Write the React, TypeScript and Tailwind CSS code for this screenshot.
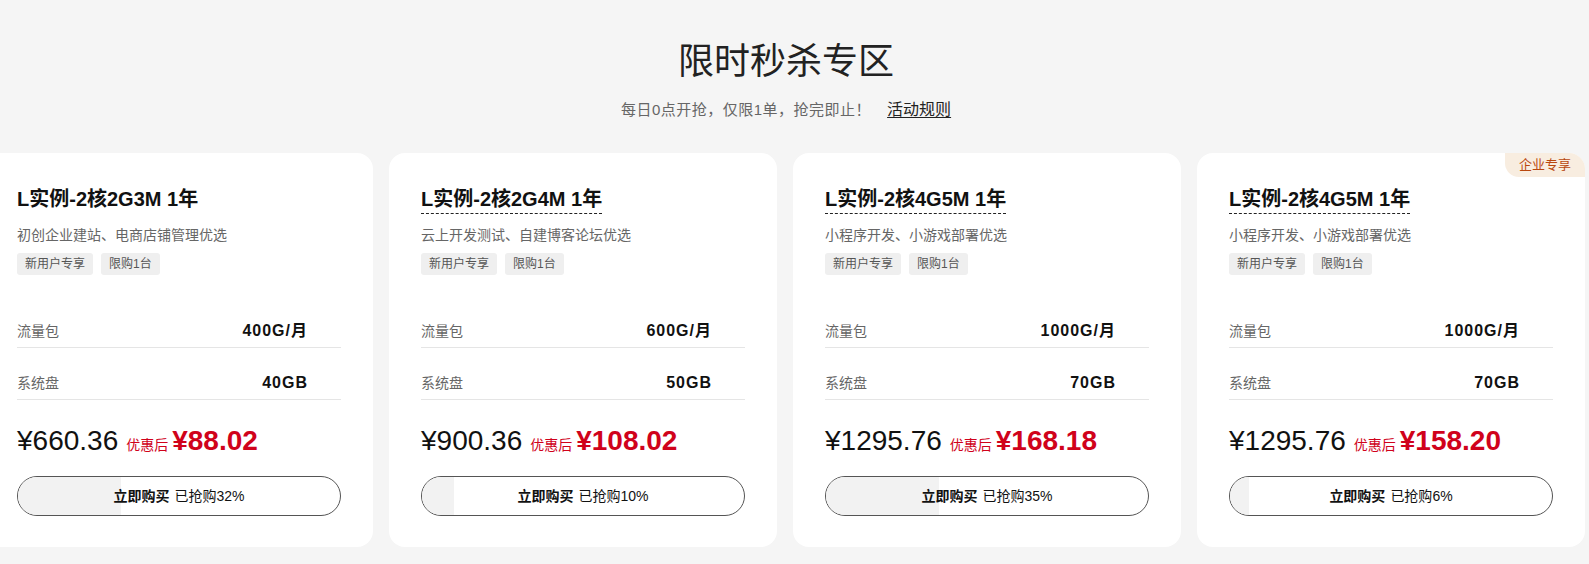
import React from "react";

type Card = {
  title: string;
  desc: string;
  dashed: boolean;
  traffic: string;
  disk: string;
  orig: string;
  price: string;
  pct: number;
  badge?: string;
};

const cards: Card[] = [
  { title: "L实例-2核2G3M 1年", desc: "初创企业建站、电商店铺管理优选", dashed: false, traffic: "400G/月", disk: "40GB", orig: "¥660.36", price: "¥88.02", pct: 32 },
  { title: "L实例-2核2G4M 1年", desc: "云上开发测试、自建博客论坛优选", dashed: true, traffic: "600G/月", disk: "50GB", orig: "¥900.36", price: "¥108.02", pct: 10 },
  { title: "L实例-2核4G5M 1年", desc: "小程序开发、小游戏部署优选", dashed: true, traffic: "1000G/月", disk: "70GB", orig: "¥1295.76", price: "¥168.18", pct: 35 },
  { title: "L实例-2核4G5M 1年", desc: "小程序开发、小游戏部署优选", dashed: true, traffic: "1000G/月", disk: "70GB", orig: "¥1295.76", price: "¥158.20", pct: 6, badge: "企业专享" },
];

function ProductCard({ c }: { c: Card }) {
  return (
    <div className="relative w-[388px] shrink-0 rounded-[16px] bg-white px-8 pt-8 pb-[31px]">
      {c.badge && (
        <div className="absolute right-0 top-0 flex h-[24px] w-[80px] items-center justify-center rounded-tr-[16px] rounded-bl-[14px] bg-[#f8ede0] text-[13px] leading-[24px] text-[#b9470e]">
          {c.badge}
        </div>
      )}
      <div>
        <span
          className={
            "inline-block border-b border-dashed text-[20px] font-bold leading-[28px] text-[#111] " +
            (c.dashed ? "border-[#222]" : "border-transparent")
          }
        >
          {c.title}
        </span>
      </div>
      <div className="mt-[10px] text-[14px] leading-[22px] text-[#666]">{c.desc}</div>
      <div className="mt-[7px] flex gap-2">
        <span className="h-[22px] rounded-[3px] bg-[#efefef] px-2 text-[12px] leading-[22px] text-[#555]">新用户专享</span>
        <span className="h-[22px] rounded-[3px] bg-[#efefef] px-2 text-[12px] leading-[22px] text-[#555]">限购1台</span>
      </div>
      <div className="mt-[21px]">
        <div className="flex justify-between border-b border-[#e5e5e5] pt-6 pb-[5px] leading-[22px]">
          <span className="text-[14px] text-[#666]">流量包</span>
          <span className="pr-[33px] text-[16px] font-bold tracking-[1px] text-[#111]">{c.traffic}</span>
        </div>
        <div className="flex justify-between border-b border-[#e5e5e5] pt-6 pb-[5px] leading-[22px]">
          <span className="text-[14px] text-[#666]">系统盘</span>
          <span className="pr-[33px] text-[16px] font-bold tracking-[1px] text-[#111]">{c.disk}</span>
        </div>
      </div>
      <div className="mt-[21px] flex items-baseline whitespace-nowrap leading-[40px]">
        <span className="text-[28px] text-[#111]">{c.orig}</span>
        <span className="ml-2 text-[14px] text-[#d0021b]">优惠后</span>
        <span className="ml-[4px] text-[28px] font-bold text-[#d0021b]">{c.price}</span>
      </div>
      <div className="relative mt-[11px] h-[40px] overflow-hidden rounded-full border border-[#555]">
        <div className="absolute left-0 top-0 h-full bg-[#f2f2f2]" style={{ width: `${c.pct}%` }} />
        <div className="relative flex h-full items-center justify-center text-[14px] text-[#111]">
          <span className="font-bold">立即购买</span>
          <span className="ml-[5px]">已抢购{c.pct}%</span>
        </div>
      </div>
    </div>
  );
}

export default function App() {
  return (
    <div
      className="h-[564px] w-full overflow-hidden bg-[#f5f5f5]"
      style={{ fontFamily: '"Liberation Sans", Arial, "Noto Sans CJK SC", sans-serif' }}
    >
      <div className="w-[1572px]">
        <div className="pt-[37px] text-center">
          <h1 className="text-[36px] font-normal leading-[50px] text-[#222]">限时秒杀专区</h1>
          <div className="mt-[12px] text-[15px] leading-[22px] tracking-[0.5px] text-[#666]">
            每日0点开抢，仅限1单，抢完即止！
            <a className="ml-4 text-[16px] tracking-normal text-[#222] underline underline-offset-2">活动规则</a>
          </div>
        </div>
        <div className="ml-[-15px] mt-[32px] flex w-[1600px] gap-4">
          {cards.map((c, i) => (
            <ProductCard key={i} c={c} />
          ))}
        </div>
      </div>
    </div>
  );
}
